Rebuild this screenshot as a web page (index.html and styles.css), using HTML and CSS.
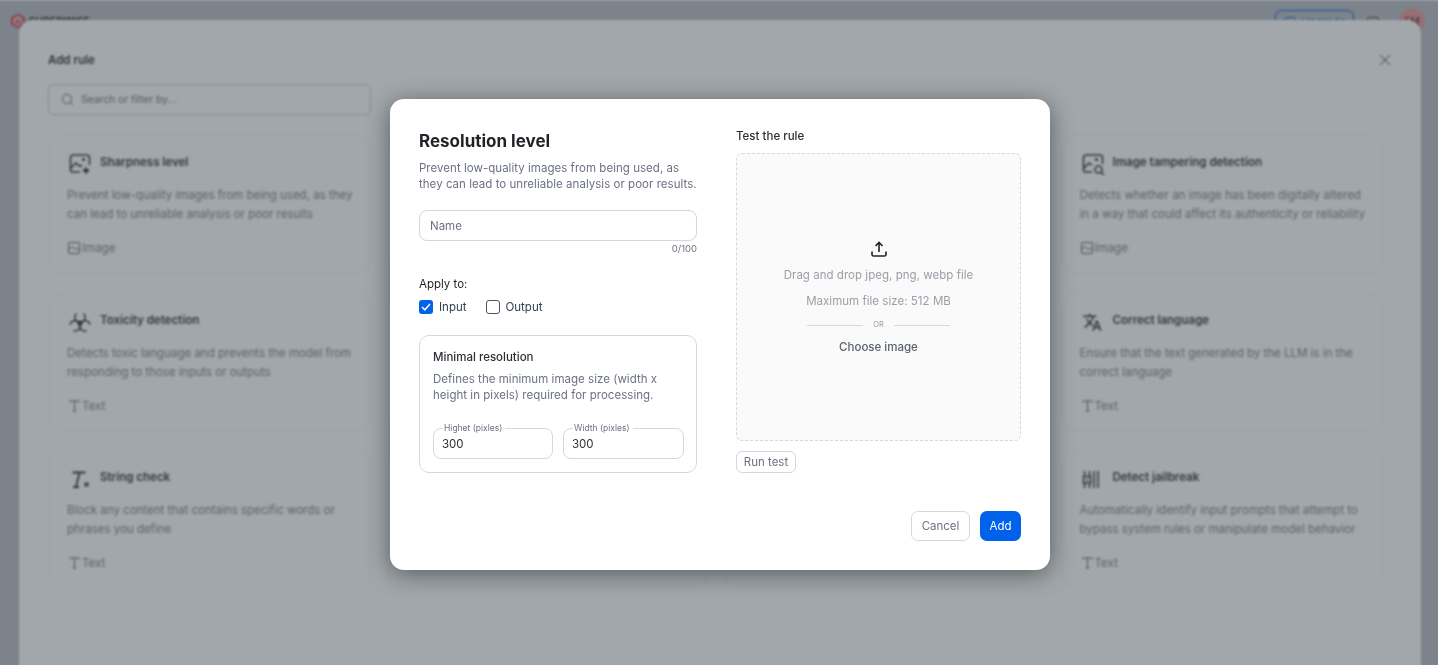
FILE: index.html
```html
<!DOCTYPE html>
<html lang="en">
<head>
  <meta charset="UTF-8">
  <title>Add rule</title>
  <link rel="stylesheet" href="styles.css">
</head>
<body>

  <!-- Page behind the dialogs -->
  <header class="topbar">
    <div class="brand">
      <svg class="brand-mark" width="16" height="16" viewBox="0 0 16 16"><path d="M8 .5l7 3.800v7.400l-7 3.800-7-3.800V4.300z" fill="#d9606a"/><path d="M8 3l4.500 2.500v5L8 13l-4.500-2.500v-5z" fill="#efd3d5"/><text x="8" y="10.500" class="brand-ai">AI</text></svg>
      <span class="brand-name">SUPERWISE</span>
    </div>
    <div class="topbar-right">
      <button class="upgrade"><span class="upgrade-icon"></span>Upgrade</button>
      <span class="gift"></span>
      <span class="avatar">FM</span>
    </div>
  </header>

  <!-- Add rule panel -->
  <div class="overlay overlay-page">
    <section class="panel">
      <div class="panel-head">
        <h3>Add rule</h3>
        <svg class="close" width="12" height="12" viewBox="0 0 12 12"><path d="M1 1l10 10M11 1 1 11" stroke="#5b636d" stroke-width="1" fill="none"/></svg>
      </div>
      <div class="search">
        <svg width="13" height="13" viewBox="0 0 14 14" fill="none" stroke="#6b7280" stroke-width="1"><circle cx="6.400" cy="6.400" r="5"/><path d="M10 10l3 3"/></svg>
        <span>Search or filter by...</span>
      </div>
      <div class="rule-grid">
        <article class="rule">
          <div class="rule-head">
            <svg class="rule-icon" width="24" height="24" viewBox="0 0 24 24" fill="none" stroke="#43484e" stroke-width="1.600"><path d="M12 20H5a2.500 2.500 0 0 1-2.500-2.500v-12A2.500 2.500 0 0 1 5 3h14a2.500 2.500 0 0 1 2.500 2.500V13"/><path d="M3 16l5-5 4 3.500 2-1.500"/><circle cx="15.500" cy="7.500" r=".8" fill="#43484e"/><path d="M18 14.500l1.300 2.600 2.700 1.400-2.700 1.400L18 22.500l-1.300-2.600-2.700-1.400 2.700-1.400z" fill="#43484e" stroke="none"/></svg>
            <h4>Sharpness level</h4>
          </div>
          <p>Prevent low-quality images from being used, as they can lead to unreliable analysis or poor results</p>
          <div class="tag">
            <svg width="12" height="12" viewBox="0 0 12 12" fill="none" stroke="#6b7280" stroke-width="1"><rect x=".5" y=".5" width="11" height="11" rx="1.500"/><path d="M.8 7.500l3-3 3.500 3 1.800-1.300 2.200 1.300"/></svg>
            <span>Image</span>
          </div>
        </article>
        <article class="rule"></article>
        <article class="rule"></article>
        <article class="rule">
          <div class="rule-head">
            <svg class="rule-icon" width="24" height="24" viewBox="0 0 24 24" fill="none" stroke="#43484e" stroke-width="1.600"><path d="M11 20H5a2.500 2.500 0 0 1-2.500-2.500v-12A2.500 2.500 0 0 1 5 3h14a2.500 2.500 0 0 1 2.500 2.500V12"/><path d="M3 16l5-5 3 2.500"/><circle cx="15.500" cy="7.500" r=".8" fill="#43484e"/><circle cx="17.500" cy="17.500" r="3.500"/><path d="M20 20l3 3"/></svg>
            <h4>Image tampering detection</h4>
          </div>
          <p>Detects whether an image has been digitally altered in a way that could affect its authenticity or reliability</p>
          <div class="tag">
            <svg width="12" height="12" viewBox="0 0 12 12" fill="none" stroke="#6b7280" stroke-width="1"><rect x=".5" y=".5" width="11" height="11" rx="1.500"/><path d="M.8 7.500l3-3 3.500 3 1.800-1.300 2.200 1.300"/></svg>
            <span>Image</span>
          </div>
        </article>

        <article class="rule">
          <div class="rule-head">
            <svg class="rule-icon" width="24" height="24" viewBox="0 0 24 24" fill="none" stroke="#43484e" stroke-width="1.500"><circle cx="12" cy="13" r="1.800"/><path d="M8.460 3.460A5.200 5.200 0 1 0 15.540 3.460"/><path d="M8.460 3.460A5.200 5.200 0 1 0 15.540 3.460" transform="rotate(120 12 13)"/><path d="M8.460 3.460A5.200 5.200 0 1 0 15.540 3.460" transform="rotate(240 12 13)"/></svg>
            <h4>Toxicity detection</h4>
          </div>
          <p>Detects toxic language and prevents the model from responding to those inputs or outputs</p>
          <div class="tag tag-text">
            <svg width="11" height="12" viewBox="0 0 11 12" fill="none" stroke="#6b7280" stroke-width="1"><path d="M1 2.500V1h9v1.500M5.500 1v10M3.800 11h3.400"/></svg>
            <span>Text</span>
          </div>
        </article>
        <article class="rule"></article>
        <article class="rule"></article>
        <article class="rule">
          <div class="rule-head">
            <svg class="rule-icon" width="24" height="24" viewBox="0 0 24 24" fill="#43484e"><g transform="translate(1 2) scale(.85)"><path d="M12.870 15.070l-2.540-2.510.03-.03c1.740-1.940 2.980-4.170 3.710-6.530H17V4h-7V2H8v2H1v1.990h11.170C11.500 7.920 10.440 9.750 9 11.350 8.070 10.320 7.300 9.190 6.690 8h-2c.73 1.630 1.730 3.170 2.980 4.560l-5.090 5.020L4 19l5-5 3.110 3.110.76-2.040zM18.500 10h-2L12 22h2l1.120-3h4.750L21 22h2l-4.500-12zm-2.620 7l1.620-4.330L19.120 17h-3.240z"/></g></svg>
            <h4>Correct language</h4>
          </div>
          <p>Ensure that the text generated by the LLM is in the correct language</p>
          <div class="tag tag-text">
            <svg width="11" height="12" viewBox="0 0 11 12" fill="none" stroke="#6b7280" stroke-width="1"><path d="M1 2.500V1h9v1.500M5.500 1v10M3.800 11h3.400"/></svg>
            <span>Text</span>
          </div>
        </article>

        <article class="rule">
          <div class="rule-head">
            <svg class="rule-icon" width="24" height="24" viewBox="0 0 24 24" fill="none" stroke="#43484e" stroke-width="1.800"><path d="M4.500 5.500h13M11.500 5.500 8 20M5 20h6"/><path d="M16.500 15.500l4 4M20.500 15.500l-4 4" stroke-width="1.700"/></svg>
            <h4>String check</h4>
          </div>
          <p>Block any content that contains specific words or phrases you define</p>
          <div class="tag tag-text">
            <svg width="11" height="12" viewBox="0 0 11 12" fill="none" stroke="#6b7280" stroke-width="1"><path d="M1 2.500V1h9v1.500M5.500 1v10M3.800 11h3.400"/></svg>
            <span>Text</span>
          </div>
        </article>
        <article class="rule"></article>
        <article class="rule"></article>
        <article class="rule">
          <div class="rule-head">
            <svg class="rule-icon" width="24" height="24" viewBox="0 0 24 24" fill="none" stroke="#43484e" stroke-width="1.500"><path d="M3.500 4v17M8.500 4v17M13 4v17M17 4v17"/><rect x="2.500" y="9.500" width="7" height="6.500" fill="#fff"/><path d="M5 12.700h2"/></svg>
            <h4>Detect jailbreak</h4>
          </div>
          <p>Automatically identify input prompts that attempt to bypass system rules or manipulate model behavior</p>
          <div class="tag tag-text">
            <svg width="11" height="12" viewBox="0 0 11 12" fill="none" stroke="#6b7280" stroke-width="1"><path d="M1 2.500V1h9v1.500M5.500 1v10M3.800 11h3.400"/></svg>
            <span>Text</span>
          </div>
        </article>
      </div>
    </section>
  </div>

  <!-- Resolution level dialog -->
  <div class="overlay overlay-panel">
    <section class="modal">
      <div class="modal-body">
        <div class="form-col">
          <h2>Resolution level</h2>
          <p class="lead">Prevent low-quality images from being used, as they can lead to unreliable analysis or poor results.</p>

          <input class="name-input" type="text" placeholder="Name">
          <div class="counter">0/100</div>

          <div class="apply-label">Apply to:</div>
          <div class="apply-row">
            <label class="check"><span class="box box-on"><svg width="10" height="8" viewBox="0 0 10 8" fill="none" stroke="#fff" stroke-width="1.500"><path d="M1 4l2.800 2.800L9 1"/></svg></span>Input</label>
            <label class="check"><span class="box"></span>Output</label>
          </div>

          <div class="res-box">
            <h5>Minimal resolution</h5>
            <p>Defines the minimum image size (width x height in pixels) required for processing.</p>
            <div class="res-fields">
              <fieldset><legend>Highet (pixles)</legend><span>300</span></fieldset>
              <fieldset><legend>Width (pixles)</legend><span>300</span></fieldset>
            </div>
          </div>
        </div>

        <div class="test-col">
          <div class="test-title">Test the rule</div>
          <div class="dropzone">
            <svg class="upload" width="16" height="16" viewBox="0 0 16 16" fill="none" stroke="#1f2328" stroke-width="1.600"><path d="M8 11V1.500M4.500 5 8 1.500 11.500 5"/><path d="M1 10.500v2.800A1.500 1.500 0 0 0 2.500 15h11a1.500 1.500 0 0 0 1.500-1.700v-2.800"/></svg>
            <div class="drop-line">Drag and drop jpeg, png, webp file</div>
            <div class="drop-line drop-size">Maximum file size: 512 MB</div>
            <div class="or"><span></span>OR<span></span></div>
            <div class="choose">Choose image</div>
          </div>
          <button class="run">Run test</button>
        </div>
      </div>
      <div class="modal-foot">
        <button class="btn">Cancel</button>
        <button class="btn btn-primary">Add</button>
      </div>
    </section>
  </div>

</body>
</html>
```

FILE: styles.css
```css
* {
  box-sizing: border-box;
}

html, body {
  height: 100%;
}

body {
  margin: 0;
  overflow: hidden;
  font-family: Inter, "Liberation Sans", sans-serif;
  background: #c1c3ca;
  border-top: 1px solid #eef0f2;
  color: #1f2328;
}

h2, h3, h4, h5, p {
  margin: 0;
}

button {
  font-family: inherit;
}

/* page behind */
.topbar {
  display: flex;
  justify-content: space-between;
  padding: 7px 13px 0 10px;
}

.brand {
  display: flex;
  align-items: center;
  gap: 3px;
  height: 16px;
  margin-top: 5px;
}

.brand-ai {
  font-size: 6px;
  font-weight: 700;
  text-anchor: middle;
  fill: #c2444f;
}

.brand-name {
  font-size: 10px;
  font-weight: 600;
  letter-spacing: .3px;
  color: #333;
}

.topbar-right {
  display: flex;
  align-items: flex-start;
}

.upgrade {
  display: flex;
  align-items: center;
  gap: 5px;
  width: 79px;
  height: 24px;
  margin-top: 2px;
  padding: 0 0 0 8px;
  border: 1px solid #1f6fd6;
  border-radius: 6px;
  background: none;
  color: #1f6fd6;
  font-size: 11px;
}

.upgrade-icon {
  width: 12px;
  height: 11px;
  border: 1px solid #1f6fd6;
  border-radius: 3px;
}

.gift {
  width: 12px;
  height: 12px;
  margin: 9px 20px 0 13px;
  border: 1px solid #555;
  border-radius: 2px;
}

.avatar {
  width: 26px;
  height: 26px;
  border-radius: 50%;
  background: #eaa3a8;
  color: #7a2a30;
  font-size: 10px;
  text-align: center;
  line-height: 26px;
}

/* overlays */
.overlay {
  position: absolute;
  inset: 0;
}

.overlay-page {
  padding: 20px 17px 0 19px;
}

.overlay-panel {
  display: flex;
  align-items: flex-start;
  justify-content: flex-start;
  padding: 99px 0 0 390px;
  background: rgba(20, 35, 45, .4);
  backdrop-filter: blur(.8px);
}

/* add rule panel */
.panel {
  height: 100%;
  padding: 30px 38px 0 29px;
  background: #fff;
  border-radius: 14px 14px 0 0;
}

.panel-head {
  display: flex;
  justify-content: space-between;
  align-items: center;
  height: 20px;
  margin-right: -7px;
}

.panel-head h3 {
  font-size: 11.500px;
  font-weight: 600;
  color: #4c5157;
}

.close {
  margin-right: -1px;
}

.search {
  display: flex;
  align-items: center;
  gap: 7px;
  width: 323px;
  height: 31px;
  margin-top: 14px;
  padding: 0 0 1px 12px;
  border: 1px solid #d3d6de;
  border-radius: 6px;
  font-size: 10.300px;
  color: #838a94;
}

.rule-grid {
  display: grid;
  grid-template-columns: repeat(4, 1fr);
  grid-template-rows: 138px 137px 138px;
  column-gap: 16px;
  row-gap: 20px;
  margin-top: 20px;
  margin-left: 1px;
}

.rule {
  padding: 15px 15px 0 17px;
  border: 1px solid #f8f8f9;
  border-radius: 14px;
  background: #fff;
  box-shadow: 0 1px 5px rgba(0, 0, 0, .02);
}

.rule-head {
  display: flex;
  gap: 8px;
  height: 31px;
  margin-bottom: 4px;
}

.rule-icon {
  flex: none;
  margin-top: 1px;
  margin-left: 1px;
}

.rule h4 {
  margin-top: 3px;
  font-size: 11.500px;
  line-height: 16px;
  font-weight: 600;
  color: #4e5359;
}

.rule p {
  font-size: 11.500px;
  line-height: 19px;
  color: #8e949d;
}

.tag {
  display: flex;
  align-items: center;
  gap: 2px;
  margin-top: 14px;
  height: 19px;
  font-size: 11.500px;
  color: #8e949d;
}

.tag svg {
  margin-left: 1px;
}

.tag-text {
  margin-left: 1px;
}

/* resolution dialog */
.modal {
  width: 660px;
  height: 471px;
  padding: 29px;
  display: flex;
  flex-direction: column;
  justify-content: space-between;
  background: #fff;
  border-radius: 14px;
  box-shadow: 0 4px 24px rgba(0, 0, 0, .45);
}

.modal-body {
  display: flex;
  gap: 39px;
}

.form-col {
  width: 278px;
}

.form-col h2 {
  font-size: 17px;
  line-height: 26px;
  font-weight: 700;
  color: #1f2328;
}

.lead {
  margin-top: 6px;
  font-size: 11.500px;
  line-height: 16px;
  letter-spacing: .03px;
  color: #6b7280;
}

.name-input {
  display: block;
  width: 100%;
  height: 31px;
  margin-top: 18px;
  padding: 0 10px;
  border: 1px solid #d3d6de;
  border-radius: 8px;
  outline: none;
  font-family: inherit;
  font-size: 11.500px;
}

.name-input::placeholder {
  color: #6b7280;
}

.counter {
  margin-top: 2px;
  font-size: 9.500px;
  line-height: 11px;
  text-align: right;
  color: #6b7280;
}

.apply-label {
  margin-top: 22px;
  font-size: 11.500px;
  line-height: 16px;
  color: #1f2328;
}

.apply-row {
  display: flex;
  gap: 19px;
  margin-top: 8px;
}

.check {
  display: flex;
  align-items: center;
  gap: 6px;
  height: 14px;
  font-size: 11.500px;
  color: #374151;
}

.box {
  display: flex;
  align-items: center;
  justify-content: center;
  width: 14px;
  height: 14px;
  border: 1px solid #4b5563;
  border-radius: 3px;
}

.box-on {
  border: none;
  background: #0061eb;
}

.res-box {
  height: 138px;
  margin-top: 21px;
  padding: 13px 12px 0 13px;
  border: 1px solid #d6d8dd;
  border-radius: 10px;
}

.res-box h5 {
  font-size: 11.500px;
  line-height: 16px;
  font-weight: 500;
  color: #2b3036;
}

.res-box p {
  margin-top: 6px;
  font-size: 11.500px;
  line-height: 16px;
  letter-spacing: .03px;
  color: #6b7280;
}

.res-fields {
  display: grid;
  grid-template-columns: 120px 121px;
  gap: 10px;
  margin-top: 20px;
}

fieldset {
  min-width: 0;
  height: 36px;
  margin: 0;
  padding: 0 0 0 8px;
  border: 1px solid #d6d8dd;
  border-radius: 8px;
  font-size: 11.500px;
  line-height: 16px;
  color: #2b3036;
}

fieldset span {
  display: block;
  margin-top: 2px;
}

legend {
  margin-left: 1px;
  padding: 0 3px 0 1px;
  font-size: 8.500px;
  line-height: 11px;
  color: #6b7280;
}

.test-col {
  width: 285px;
}

.test-title {
  font-size: 11.500px;
  line-height: 16px;
  font-weight: 500;
  color: #2b3036;
}

.dropzone {
  display: flex;
  flex-direction: column;
  align-items: center;
  height: 288px;
  margin-top: 9px;
  padding-top: 87px;
  border: 1px dashed #d6d8dd;
  border-radius: 6px;
  background: #fafafa;
}

.upload {
  display: block;
}

.drop-line {
  margin-top: 10px;
  font-size: 11.500px;
  line-height: 16px;
  letter-spacing: .03px;
  color: #9aa0a8;
}

.drop-size {
  margin-top: 10px;
}

.or {
  display: flex;
  align-items: center;
  gap: 10px;
  margin-top: 9px;
  font-size: 7.500px;
  line-height: 14px;
  color: #9aa0a8;
}

.or span {
  width: 56px;
  height: 1px;
  background: #d6d8dd;
}

.choose {
  margin-top: 7px;
  font-size: 11.500px;
  line-height: 16px;
  font-weight: 500;
  color: #5a626d;
}

.run {
  display: block;
  width: 60px;
  height: 22px;
  margin-top: 10px;
  padding: 0 0 1px;
  border: 1px solid #d6d8dd;
  border-radius: 6px;
  background: #fff;
  font-size: 11.500px;
  color: #6b7280;
}

.modal-foot {
  display: flex;
  justify-content: flex-end;
  gap: 10px;
}

.btn {
  width: 59px;
  height: 30px;
  padding: 0;
  border: 1px solid #d6d8dd;
  border-radius: 7px;
  background: #fff;
  font-size: 11.500px;
  color: #6b7280;
}

.btn-primary {
  width: 41px;
  border: none;
  background: #0061eb;
  color: #fff;
}
```
